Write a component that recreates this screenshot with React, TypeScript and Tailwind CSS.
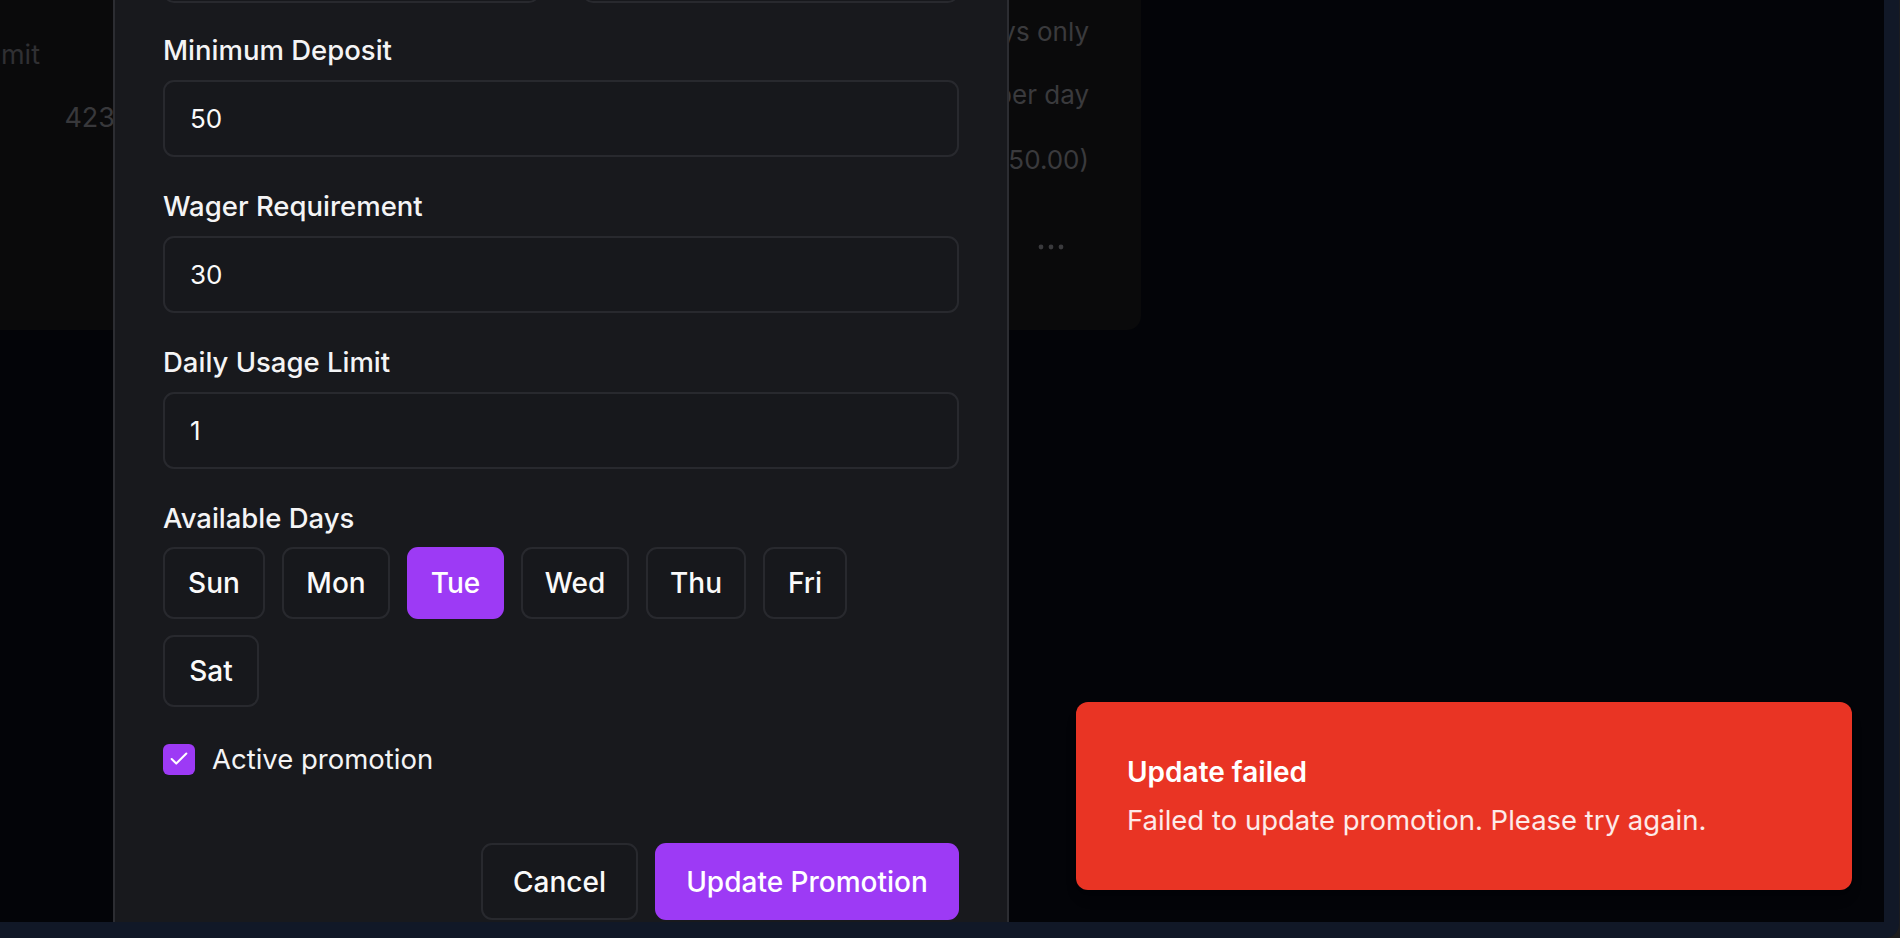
import { Check } from "lucide-react";

const days = [
  { label: "Sun", width: "w-[102px]", active: false },
  { label: "Mon", width: "w-[108px]", active: false },
  { label: "Tue", width: "w-[97px]", active: true },
  { label: "Wed", width: "w-[108px]", active: false },
  { label: "Thu", width: "w-[100px]", active: false },
  { label: "Fri", width: "w-[84px]", active: false },
  { label: "Sat", width: "w-[96px]", active: false },
];

const fields = [
  { label: "Minimum Deposit", value: "50" },
  { label: "Wager Requirement", value: "30" },
  { label: "Daily Usage Limit", value: "1" },
];

function Field({ label, value, first }: { label: string; value: string; first?: boolean }) {
  return (
    <div className={first ? "mt-[26px]" : "mt-[28px]"}>
      <label className="block text-[27.5px] leading-[42px] font-medium text-[#f4f4f5]">{label}</label>
      <div className="mt-[9px] flex h-[77px] items-center rounded-[11px] border-2 border-[#28292e] bg-[#17181c] px-[25px] text-[26px] text-[#fafafa]">
        {value}
      </div>
    </div>
  );
}

export default function App() {
  return (
    <div className="h-screen w-screen overflow-hidden bg-[#1c1c1e] font-[Inter,sans-serif]">
      <div className="h-[938px] w-[1899px] rounded-br-[14px] bg-[#111827]">
        <div className="relative h-[922px] w-[1884px] overflow-hidden bg-[#030408]">
          {/* Page behind the backdrop */}
          <div className="flex h-[330px] w-[1141px] justify-between rounded-br-[14px] bg-[#0a0a0b] pr-[52px]">
            <div className="flex flex-col">
              <div className="mt-[37px] flex w-[40px] justify-end whitespace-nowrap text-[27px] leading-[35px] text-[#303033]">
                Usage Limit
              </div>
              <div className="mt-[28px] flex w-[115px] justify-end whitespace-nowrap text-[27px] leading-[35px] text-[#38383b]">
                423
              </div>
            </div>
            <div className="flex flex-col items-end text-[26px] leading-[35px] text-[#3a3a3d]">
              <div className="mt-[14px] whitespace-nowrap">Tuesdays only</div>
              <div className="mt-[28px] whitespace-nowrap">1 use per day</div>
              <div className="mt-[30px] whitespace-nowrap">(Min. $50.00)</div>
              <div className="mt-[66px] mr-[25px]">
                <svg width="26" height="8" viewBox="0 0 26 8" fill="#3a3a3d">
                  <circle cx="3" cy="4" r="2.4" />
                  <circle cx="13" cy="4" r="2.4" />
                  <circle cx="23" cy="4" r="2.4" />
                </svg>
              </div>
            </div>
          </div>

          {/* Edit promotion dialog (scrolled) */}
          <div className="absolute left-[113px] top-0 h-[1000px] w-[896px] border-x-2 border-[#2c2d32] bg-[#18191d] px-[48px]">
            <div className="-mt-[74px] grid grid-cols-2 gap-[42px]">
              <div className="h-[77px] rounded-[11px] border-2 border-[#28292e] bg-[#17181c]" />
              <div className="h-[77px] rounded-[11px] border-2 border-[#28292e] bg-[#17181c]" />
            </div>

            {fields.map((f, i) => (
              <Field key={f.label} label={f.label} value={f.value} first={i === 0} />
            ))}

            <div className="mt-[28px]">
              <div className="text-[27.5px] leading-[42px] font-medium text-[#f4f4f5]">Available Days</div>
              <div className="mt-[8px] flex flex-wrap gap-x-[17px] gap-y-[16px]">
                {days.map((d) => (
                  <button
                    key={d.label}
                    className={`flex h-[72px] items-center justify-center rounded-[11px] text-[28px] font-medium ${d.width} ${
                      d.active
                        ? "bg-[#9d3af5] text-white"
                        : "border-2 border-[#28292e] bg-[#17181c] text-[#fafafa]"
                    }`}
                  >
                    {d.label}
                  </button>
                ))}
              </div>
            </div>

            <div className="mt-[31px] flex h-[42px] items-center gap-[17px]">
              <div className="flex h-[31px] w-[32px] items-center justify-center rounded-[6px] bg-[#9d3af5] text-white">
                <Check size={22} strokeWidth={2.2} />
              </div>
              <span className="text-[27.5px] leading-[42px] text-[#f4f4f5]">Active promotion</span>
            </div>

            <div className="mt-[63px] flex justify-end gap-[17px]">
              <button className="flex h-[77px] w-[157px] items-center justify-center rounded-[11px] border-2 border-[#28292e] bg-[#17181c] text-[28px] font-medium text-[#fafafa]">
                Cancel
              </button>
              <button className="flex h-[77px] w-[304px] items-center justify-center rounded-[11px] bg-[#9d3af5] text-[28px] font-medium text-white">
                Update Promotion
              </button>
            </div>
          </div>

          {/* Toast */}
          <div className="absolute bottom-[32px] right-[32px] flex h-[188px] w-[776px] flex-col justify-center gap-[10px] rounded-[12px] bg-[#e93424] px-[51px] shadow-lg">
            <div className="text-[28px] leading-[38px] font-semibold text-white">Update failed</div>
            <div className="text-[27.5px] leading-[38px] text-white/90">
              Failed to update promotion. Please try again.
            </div>
          </div>
        </div>
      </div>
    </div>
  );
}
